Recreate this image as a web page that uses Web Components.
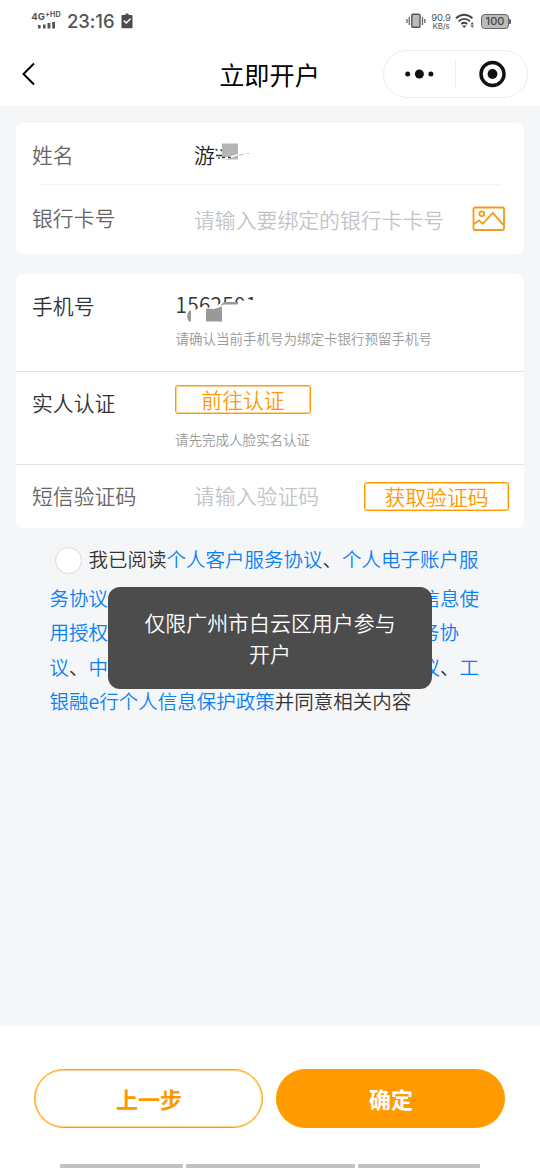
<!DOCTYPE html>
<html lang="zh-CN">
<head>
<meta charset="utf-8">
<title>立即开户</title>
<style>
html,body{margin:0;padding:0}
body{width:540px;height:1170px;overflow:hidden;background:#f5f6f8;font-family:"Noto Sans CJK SC",sans-serif;font-weight:350;color:#333}
</style>
</head>
<body>
<account-page></account-page>
<script>
function define(name, html) {
  const t = document.createElement('template');
  t.innerHTML = html;
  customElements.define(name, class extends HTMLElement {
    constructor() {
      super();
      this.attachShadow({mode: 'open'}).appendChild(t.content.cloneNode(true));
    }
  });
}

define('status-bar', `
<style>
:host{display:flex;align-items:center;justify-content:space-between;height:42px;box-sizing:border-box;padding:0 29px 0 31px;color:#555;font-family:Inter,sans-serif}
.g{display:flex;align-items:center}
.net{width:30px;height:20px;display:flex;flex-direction:column;align-items:center;font:700 9.500px/11px Inter,sans-serif;white-space:nowrap}
.net div{display:flex;letter-spacing:.1px}
.net sup{font-size:7.200px;line-height:8px;vertical-align:0}
.time{font:500 18.500px/20px Inter,sans-serif;margin:0 0 0 6px;width:48px;letter-spacing:-.1px}
.speed{font:400 9.500px/9px Inter,sans-serif;text-align:center;width:20px;margin:0 6px 0 4px;white-space:nowrap;letter-spacing:-.2px}
.speed b{display:block;font-weight:400;font-size:8px;line-height:8px}
.bat{box-sizing:border-box;width:28px;height:15px;border:1px solid #666;border-radius:4px;background:#bbb;font:500 11px/13px Inter,sans-serif;text-align:center;margin-left:5px;color:#444}
.tip{width:2px;height:5px;background:#666;border-radius:0 1px 1px 0}
.r svg:first-child{margin-right:1px}
svg{display:block}
</style>
<div class="g">
 <div class="net"><div>4G<sup>+HD</sup></div><svg width="20" height="8"><path d="M2 3h2.600v3.500H2zM7 2.500h2.600v4H7zM11.500 1h2.900v5.500h-2.900zM16.200 0H19v6.500h-2.800z" fill="#555"/></svg></div>
 <div class="time">23:16</div>
 <svg width="12" height="16" style="margin-left:6px"><path d="M1 2h3l1-1.500h2L8 2h3q.5 0 .5.700V14.500q0 .700-.7.700H1.200q-.7 0-.7-.7V2.700Q.5 2 1 2z" fill="#4c4c4c"/><path d="M2.800 7.500l2.500 2.500 4.200-4.300" fill="none" stroke="#fff" stroke-width="1.500"/></svg>
</div>
<div class="g r">
 <svg width="20" height="16"><rect x="5.800" y="1.200" width="8.200" height="13" rx="1" fill="#bbb" stroke="#555" stroke-width="1.400"/><path d="M3.300 4v8M1 6v4M16.500 4v8M18.800 6v4" stroke="#666" stroke-width="1.300"/></svg>
 <div class="speed">90.9<b>KB/s</b></div>
 <svg width="20" height="16" style="margin-left:-2px;margin-right:1px"><g fill="none" stroke="#444" stroke-width="1.800"><path d="M1 5.200Q9 -1.800 17.500 5.200M3.600 8.300Q9.200 3.500 15 8.300M6.200 11Q9.200 8.600 12.300 11"/></g><path d="M7 12.500h4.500L9.200 15z" fill="#444"/><path d="M15.500 11.500l1.700-2.500 1.700 2.500zM15.500 12.500h3.400l-1.700 2.500z" fill="#555"/></svg>
 <div class="bat">100</div><i class="tip"></i>
</div>`);

define('nav-bar', `
<style>
:host{display:grid;grid-template-columns:1fr 104px 1fr;align-items:center;height:64px;padding:0 12px 0 20px;color:#000}
h1{margin:0;font-size:25.200px;line-height:36px;font-weight:400;white-space:nowrap;text-align:center;padding-left:1px;position:relative;left:-5px}
.cap{justify-self:end;box-sizing:border-box;width:145px;height:48px;border:1px solid #ededed;border-radius:24px;display:grid;grid-template-columns:71px 1px 1fr;align-items:center;justify-items:center}
i{width:1px;height:28px;background:#ececec}
svg{display:block}
</style>
<svg width="18" height="24"><path d="M14 1.500L3.500 12 14 22.500" fill="none" stroke="#000" stroke-width="2"/></svg>
<h1>立即开户</h1>
<div class="cap"><svg width="30" height="12"><circle cx="2.700" cy="6" r="2.500" fill="#111"/><circle cx="14.400" cy="6" r="4.500" fill="#111"/><circle cx="25.900" cy="6" r="2.500" fill="#111"/></svg><i></i><svg width="28" height="28"><circle cx="14.500" cy="14" r="11.500" fill="none" stroke="#111" stroke-width="3.500"/><circle cx="14.500" cy="14" r="4.900" fill="#111"/></svg></div>`);

define('form-card', `<style>:host{display:block;background:#fff;border-radius:7px;margin:0 16px}</style><slot></slot>`);

define('form-row', `
<style>
:host{display:grid;grid-template-columns:var(--label,143.500px) 1fr auto;box-sizing:border-box;padding:0 16px;font-size:20.850px;line-height:30px;color:var(--ink,#333);white-space:nowrap}
.l{padding-top:var(--lt,0)}.v{padding-top:var(--vt,0)}.a{padding-top:var(--at,0)}
</style><div class="l"><slot name="label"></slot></div><div class="v"><slot></slot></div><div class="a"><slot name="action"></slot></div>`);

define('hint-text', `<style>:host{display:block;font-size:13.500px;line-height:20px;color:#999}</style><slot></slot>`);
define('place-holder', `<style>:host{display:block;color:#c4c4c8}</style><slot></slot>`);
define('outline-button', `<style>:host{display:block;box-sizing:border-box;height:29px;border:1px solid #ff9b00;box-shadow:inset 0 0 0 1px #ff9b0070;border-radius:3px;color:#ff9800;text-align:center;line-height:27px}</style><slot></slot>`);

define('masked-name', `
<style>:host{display:block;position:relative;color:#222}svg{position:absolute;left:20px;top:1px}</style>
游<svg width="55" height="30"><path d="M1.500 9l2 1.500M6.500 9.500l1.500 1.500M2 15.500h6" stroke="#333" stroke-width="1.300"/><path d="M8 3.500h16v16H8z" fill="#b5b5b5"/><path d="M5 18.500l9-1.500 10-3v1l-8 3.500-8 1.500z" fill="#fff"/><path d="M4 17.500l2 1M8 17.500h3M14 17.500h3" stroke="#444" stroke-width="1.300"/><path d="M25 15l5-1M33 13.500h2" stroke="#bbb"/></svg>`);

define('masked-phone', `
<style>:host{display:block;position:relative;height:30px;letter-spacing:.250px}svg{position:absolute;left:0;top:0}</style>
1562501<svg width="90" height="36"><path d="M11.500 21q4-3 8 0q5-5 10.500-2l9-1.500 6-3.500h17l3-3q4 2 6 0h12v25H11.500z" fill="#fff"/><path d="M13.500 21.500h1.500v11h-2q-4-5.500.500-11z" fill="#999"/><path d="M30 19.500l8 .5 8-2.500V32.500H30z" fill="#999"/><path d="M44 17l4-4h14v2.500H48z" fill="#999"/></svg>`);

define('agreement-text', `
<style>
:host{display:block;margin:11px 61px 0 49.500px;font-size:19.500px;line-height:34.600px;color:#333;white-space:nowrap}
.f{display:flex;align-items:center;height:41.500px;padding-left:5px}
.f span:last-child{position:relative;top:-.5px}
.c{box-sizing:border-box;width:27px;height:27px;border-radius:50%;border:1.500px solid #d8d8dc;background:#fff;margin:1px 7px 0 0}
.r{display:flex;justify-content:space-between;height:34.600px}
.r.s{padding-right:20px}
a{color:#0a80f5}
</style>
<div class="f"><span class="c"></span><span>我已阅读<a>个人客户服务协议</a>、<a>个人电子账户服</a></span></div>
<div class="r"><a>务协议</a><a>信息使</a></div>
<div class="r s"><a>用授权</a><a>务协</a></div>
<div class="r"><span><a>议</a>、<a>中</a></span><span><a>议</a>、<a>工</a></span></div>
<div class="r"><span><a>银融e行个人信息保护政策</a>并同意相关内容</span></div>`);

define('toast-message', `<style>:host{position:absolute;left:108px;top:587px;width:324px;height:102px;box-sizing:border-box;padding:20px 30px;border-radius:12px;background:#4c4c4c;color:#fff;font-size:20.950px;line-height:31px;text-align:center}</style><slot></slot>`);

define('pill-button', `<style>:host{box-sizing:border-box;width:229px;height:59px;border:1px solid #ff9b00;box-shadow:inset 0 0 0 1px #ff9b0070;border-radius:30px;color:#ff9800;font-size:22px;line-height:56px;font-weight:700;text-align:center}:host([primary]){background:#ff9b00;color:#fff}</style><slot></slot>`);

define('bottom-bar', `
<style>:host{display:flex;flex-direction:column;justify-content:space-between;box-sizing:border-box;height:144px;background:#fff;padding:43px 0 2px}
.b{display:flex;gap:13px;padding-left:34.400px}.h{display:flex;gap:3px;padding-left:60px}.h i{height:4px;background:#c1c1c1;border-radius:1px;width:122.500px}.h i:nth-child(2){width:169px}</style>
<div class="b"><slot></slot></div><div class="h"><i></i><i></i><i></i></div>`);

define('account-page', `
<style>
:host{display:flex;flex-direction:column;position:relative;width:540px;height:1170px}
header{background:#fff;height:106px}
main{flex:1;padding-top:17px}
.one{height:131px}.two{height:254px;margin-top:20px}
hr{border:0;margin:0;height:1px;background:#f3f3f4}
.in{margin:0 24px}.full{background:#e3e3e5;height:1.500px}
svg{display:block}
</style>
<header><status-bar></status-bar><nav-bar></nav-bar></header>
<main>
<form-card class="one">
 <form-row style="height:61px;--label:162px;--ink:#666;--lt:16px;--vt:16px"><span slot="label">姓名</span><masked-name></masked-name></form-row>
 <hr class="in">
 <form-row style="height:69px;--label:162px;--ink:#666;--lt:17px;--vt:19px;--at:21px"><span slot="label">银行卡号</span><place-holder>请输入要绑定的银行卡卡号</place-holder>
 <svg slot="action" width="36" height="26" fill="none" stroke="#f39a1b" stroke-width="1.800"><rect x="1.500" y="1.500" width="30.500" height="22.500" rx="1.500"/><circle cx="9.800" cy="7.800" r="2.400"/><path d="M1.800 18.300l5-4 4 3.500L20.800 6.800 31.800 19.300"/></svg></form-row>
</form-card>
<form-card class="two">
 <form-row style="height:96.500px;--lt:16px;--vt:15px"><span slot="label">手机号</span><masked-phone></masked-phone><hint-text style="margin-top:9px">请确认当前手机号为绑定卡银行预留手机号</hint-text></form-row>
 <hr class="full">
 <form-row style="height:91.500px;--label:143px;--lt:15.400px;--vt:13px"><span slot="label">实人认证</span><outline-button style="width:136px">前往认证</outline-button><hint-text style="margin-top:15px">请先完成人脸实名认证</hint-text></form-row>
 <hr class="full">
 <form-row style="height:62px;--label:162px;--ink:#666;--lt:15.400px;--vt:15.400px;--at:17px"><span slot="label">短信验证码</span><place-holder>请输入验证码</place-holder><outline-button slot="action" style="width:145px;margin-right:-1px">获取验证码</outline-button></form-row>
</form-card>
<agreement-text></agreement-text>
</main>
<bottom-bar><pill-button>上一步</pill-button><pill-button primary>确定</pill-button></bottom-bar>
<toast-message>仅限广州市白云区用户参与开户</toast-message>`);
</script>
</body>
</html>
